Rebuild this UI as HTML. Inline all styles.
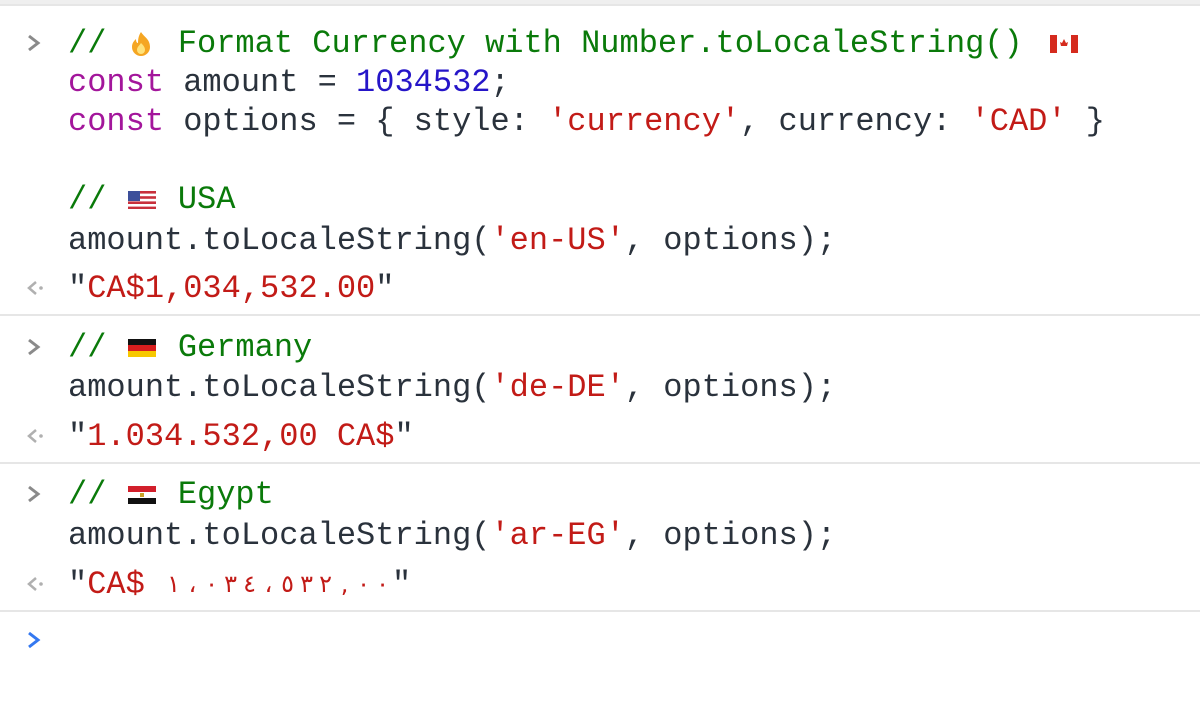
<!DOCTYPE html>
<html><head><meta charset="utf-8"><style>
body{margin:0;width:1200px;height:719px;background:#fff;position:relative;overflow:hidden;font-family:"Liberation Mono","DejaVu Sans Mono",monospace;font-size:32px;color:#2a323c}
.l{position:absolute;left:68px;height:39px;line-height:39px;white-space:pre}
.c{color:#0a7a0a}.k{color:#a3169b}.n{color:#2515c8}.s{color:#c21b17}.q{color:#2a323c}
.hr{position:absolute;left:0;width:1200px;height:2px;background:#e6e6e6}
.e{display:inline-block;width:33px;height:39px;vertical-align:top;position:relative}
.e svg{position:absolute;left:2px;top:11px}
.p{position:absolute;left:26px}
.ar{display:inline-block;width:19px;text-align:center;font-family:"DejaVu Sans",sans-serif;font-size:24px;vertical-align:top}
</style></head><body>
<div style="position:absolute;top:0;left:0;width:1200px;height:4px;background:#efefef"></div>
<div class="hr" style="top:4px"></div>
<svg class="p" style="top:34px" width="16" height="18"><path d="M3 2l9 7-9 7" stroke="#8a8a8a" stroke-width="3" fill="none"/></svg>
<div class="l" style="top:24px"><span class="c">// <span class="e"><svg width="26" height="26" viewBox="0 0 26 26" style="top:7px"><path d="M13 1c3 5 9 7 9 15a9 9 0 0 1-18 0c0-4 2-6 4-8 0 3 1 4 2 4 0-5 1-8 3-11z" fill="#f5a623"/><path d="M13 12c2 2 4 4 4 7a4 4 0 0 1-8 0c0-3 2-4 4-7z" fill="#ffe27a"/></svg></span> Format Currency with Number.toLocaleString() <span class="e"><svg width="28" height="18" viewBox="0 0 28 18" style="left:8px"><rect width="28" height="18" fill="#fff"/><rect width="7" height="18" fill="#d52b1e"/><rect x="21" width="7" height="18" fill="#d52b1e"/><path d="M14 4l2 4 2-1-1 4h-6l-1-4 2 1z" fill="#d52b1e"/></svg></span></span></div>
<div class="l" style="top:63px"><span class="k">const</span> amount = <span class="n">1034532</span>;</div>
<div class="l" style="top:102px"><span class="k">const</span> options = { style: <span class="s">'currency'</span>, currency: <span class="s">'CAD'</span> }</div>
<div class="l" style="top:180px"><span class="c">// <span class="e"><svg width="28" height="18" viewBox="0 0 28 18"><rect width="28" height="18" fill="#c8303c"/><rect y="2.6" width="28" height="2.6" fill="#fff"/><rect y="7.8" width="28" height="2.6" fill="#fff"/><rect y="13" width="28" height="2.6" fill="#fff"/><rect width="12" height="10" fill="#3c4f9a"/></svg></span> USA</span></div>
<div class="l" style="top:221px">amount.toLocaleString(<span class="s">'en-US'</span>, options);</div>
<svg class="p" style="top:280px" width="20" height="16"><path d="M10 2l-7 6 7 6" stroke="#b0b0b0" stroke-width="2.5" fill="none"/><circle cx="15" cy="8" r="1.8" fill="#b0b0b0"/></svg>
<div class="l" style="top:269px"><span class="q">"</span><span class="s">CA$1,034,532.00</span><span class="q">"</span></div>
<div class="hr" style="top:314px"></div>
<svg class="p" style="top:338px" width="16" height="18"><path d="M3 2l9 7-9 7" stroke="#8a8a8a" stroke-width="3" fill="none"/></svg>
<div class="l" style="top:328px"><span class="c">// <span class="e"><svg width="28" height="18" viewBox="0 0 28 18"><rect width="28" height="6" fill="#111"/><rect y="6" width="28" height="6" fill="#d81e1e"/><rect y="12" width="28" height="6" fill="#f7c800"/></svg></span> Germany</span></div>
<div class="l" style="top:368px">amount.toLocaleString(<span class="s">'de-DE'</span>, options);</div>
<svg class="p" style="top:428px" width="20" height="16"><path d="M10 2l-7 6 7 6" stroke="#b0b0b0" stroke-width="2.5" fill="none"/><circle cx="15" cy="8" r="1.8" fill="#b0b0b0"/></svg>
<div class="l" style="top:417px"><span class="q">"</span><span class="s">1.034.532,00 CA$</span><span class="q">"</span></div>
<div class="hr" style="top:462px"></div>
<svg class="p" style="top:485px" width="16" height="18"><path d="M3 2l9 7-9 7" stroke="#8a8a8a" stroke-width="3" fill="none"/></svg>
<div class="l" style="top:475px"><span class="c">// <span class="e"><svg width="28" height="18" viewBox="0 0 28 18"><rect width="28" height="6" fill="#d21f2b"/><rect y="6" width="28" height="6" fill="#fff"/><rect y="12" width="28" height="6" fill="#111"/><rect x="12" y="7" width="4" height="4" fill="#c9a227"/></svg></span> Egypt</span></div>
<div class="l" style="top:516px">amount.toLocaleString(<span class="s">'ar-EG'</span>, options);</div>
<svg class="p" style="top:576px" width="20" height="16"><path d="M10 2l-7 6 7 6" stroke="#b0b0b0" stroke-width="2.5" fill="none"/><circle cx="15" cy="8" r="1.8" fill="#b0b0b0"/></svg>
<div class="l" style="top:565px"><span class="q">"</span><span class="s">CA$ <span class="ar">١</span><span class="ar">،</span><span class="ar">٠</span><span class="ar">٣</span><span class="ar">٤</span><span class="ar">،</span><span class="ar">٥</span><span class="ar">٣</span><span class="ar">٢</span><span class="ar">,</span><span class="ar">٠</span><span class="ar">٠</span></span><span class="q">"</span></div>
<div class="hr" style="top:610px"></div>
<svg class="p" style="top:631px" width="16" height="18"><path d="M3 2l9 7-9 7" stroke="#3478f0" stroke-width="3" fill="none"/></svg>
</body></html>
